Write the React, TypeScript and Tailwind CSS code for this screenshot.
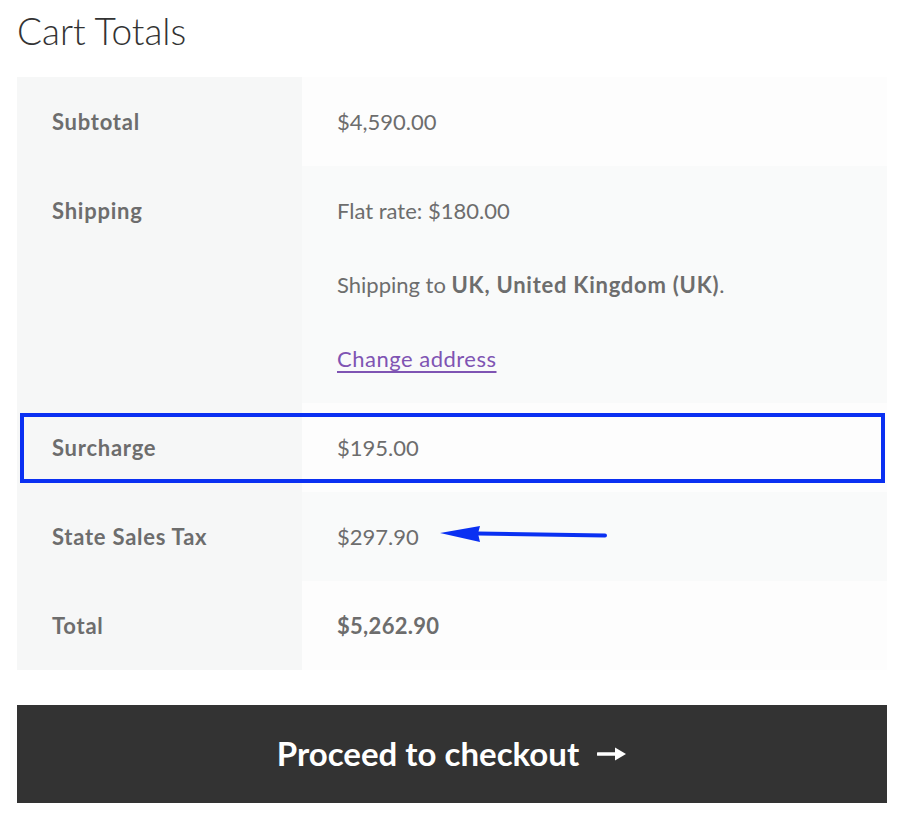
import React from "react";

const font = { fontFamily: "Lato, 'Open Sans', sans-serif" };

function Row({
  label,
  children,
  alt,
  bold,
}: {
  label: string;
  children: React.ReactNode;
  alt?: boolean;
  bold?: boolean;
}) {
  return (
    <div className="flex">
      <div className="w-[285px] shrink-0 bg-[#f6f7f7] px-[35px] py-[30px] text-[22px] leading-[29px] font-bold tracking-[0.75px] text-[#6d6d6d]">
        {label}
      </div>
      <div
        className={`flex-1 px-[35px] py-[30px] text-[22px] leading-[29px] text-[#6d6d6d] ${
          alt ? "bg-[#f9fafa]" : "bg-[#fdfdfd]"
        } ${bold ? "font-bold tracking-[0.3px]" : "font-normal"}`}
      >
        {children}
      </div>
    </div>
  );
}

export default function App() {
  return (
    <div className="w-[900px] h-[820px] bg-white pl-[17px] pr-[13px]" style={font}>
      <h2 className="pt-[7px] text-[37px] leading-[48px] font-light text-[#333333]">Cart Totals</h2>
      <div className="relative mt-[22px]">
        <Row label="Subtotal">$4,590.00</Row>
        <Row label="Shipping" alt>
          <div className="flex flex-col gap-[45px]">
            <p>Flat rate: $180.00</p>
            <p>
              Shipping to <strong className="font-bold tracking-[0.75px]">UK, United Kingdom (UK)</strong>.
            </p>
            <p>
              <a
                href="#"
                className="tracking-[0.5px] text-[#7f54b3] underline underline-offset-[4px] decoration-[2px]"
              >
                Change address
              </a>
            </p>
          </div>
        </Row>
        <Row label="Surcharge">$195.00</Row>
        <Row label="State Sales Tax" alt>
          $297.90
        </Row>
        <Row label="Total" bold>
          $5,262.90
        </Row>

        <div className="pointer-events-none absolute left-[3px] top-[336px] h-[70px] w-[865px] border-[4px] border-[#0a30f2]" />
        <svg
          className="pointer-events-none absolute left-[421px] top-[446px]"
          width="172"
          height="24"
          viewBox="0 0 172 24"
        >
          <line x1="40" y1="10.5" x2="167" y2="12.5" stroke="#0a30f2" strokeWidth="4" strokeLinecap="round" />
          <path d="M2 10 L42 3 L40 10.5 L42 19 Z" fill="#0a30f2" />
        </svg>
      </div>
      <button className="mt-[35px] flex h-[98px] w-[870px] items-center justify-center gap-[18px] bg-[#333333] text-[33px] font-bold text-white">
        <span>Proceed to checkout</span>
        <svg width="30" height="16" viewBox="0 0 30 16">
          <line x1="1" y1="8" x2="20" y2="8" stroke="white" strokeWidth="3.5" strokeLinecap="round" />
          <path d="M18 1.5 L29 8 L18 14.5 Z" fill="white" />
        </svg>
      </button>
    </div>
  );
}
